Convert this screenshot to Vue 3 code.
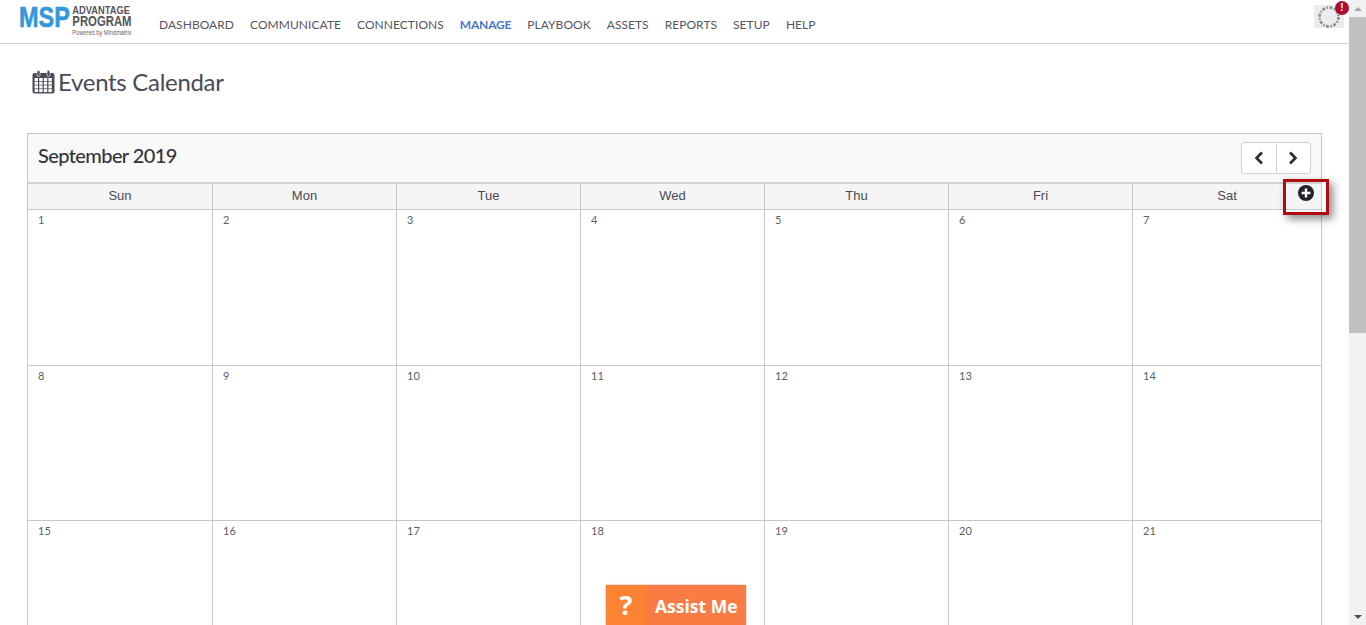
<template>
  <div class="screen">
    <div class="page">
      <!-- top navigation -->
      <header class="topbar">
        <div class="logo-slot">
          <div class="logo">
            <span class="logo-msp">MSP</span>
            <div class="logo-side">
              <span class="logo-adv">ADVANTAGE</span>
              <span class="logo-prog">PROGRAM</span>
              <span class="logo-powered">Powered by Mindmatrix</span>
            </div>
          </div>
        </div>
        <nav class="nav">
          <a v-for="item in navItems" :key="item" class="nav-item" :class="{ active: item === 'MANAGE' }">{{ item }}</a>
        </nav>
        <div class="avatar">
          <svg width="26" height="24" viewBox="0 0 26 24">
            <circle cx="13" cy="12" r="9.5" fill="none" stroke="#8c8c8c" stroke-width="2.6" stroke-dasharray="3 1.4 1.5 1.6" />
          </svg>
          <span class="alert">!</span>
        </div>
      </header>

      <h1 class="page-title">
        <svg class="title-icon" width="23" height="24" viewBox="0 0 23 24">
          <rect x="0.5" y="3" width="22" height="20.5" rx="2" fill="#4a4a55" />
          <rect x="5" y="0.5" width="3" height="6" rx="1.4" fill="#4a4a55" stroke="#fff" stroke-width="0.6" />
          <rect x="15" y="0.5" width="3" height="6" rx="1.4" fill="#4a4a55" stroke="#fff" stroke-width="0.6" />
          <g fill="#fff">
            <rect v-for="c in iconCells" :key="c.key" :x="c.x" :y="c.y" width="3.4" height="3" />
          </g>
        </svg>
        <span>Events Calendar</span>
      </h1>

      <section class="calendar">
        <div class="cal-toolbar">
          <h2 class="cal-month">September 2019</h2>
          <div class="cal-nav">
            <button class="cal-btn">
              <svg width="10" height="14" viewBox="0 0 10 14"><path d="M8 1.5 2.5 7 8 12.5" fill="none" stroke="#2b2b33" stroke-width="2.6" /></svg>
            </button>
            <button class="cal-btn">
              <svg width="10" height="14" viewBox="0 0 10 14"><path d="M2 1.5 7.5 7 2 12.5" fill="none" stroke="#2b2b33" stroke-width="2.6" /></svg>
            </button>
          </div>
        </div>

        <div class="cal-head">
          <div v-for="d in weekdays" :key="d" class="cal-head-cell">{{ d }}</div>
        </div>

        <div v-for="(week, i) in weeks" :key="i" class="cal-week">
          <div v-for="day in week" :key="day" class="cal-day">{{ day }}</div>
        </div>

        <!-- callout over the add button -->
        <div class="add-callout">
          <span class="add-btn">
            <svg width="16" height="16" viewBox="0 0 16 16">
              <circle cx="8" cy="8" r="8" fill="#24242c" />
              <path d="M8 3.6v8.8M3.6 8h8.8" stroke="#fff" stroke-width="2.4" />
            </svg>
          </span>
        </div>
      </section>

      <div class="assist">
        <span class="assist-q">?</span>
        <span class="assist-label">Assist Me</span>
      </div>
    </div>

    <div class="scrollbar">
      <div class="scroll-arrow"><span class="tri up"></span></div>
      <div class="scroll-thumb"></div>
      <div class="scroll-rest"></div>
      <div class="scroll-arrow"><span class="tri down"></span></div>
    </div>
  </div>
</template>

<script setup>
const navItems = ['DASHBOARD', 'COMMUNICATE', 'CONNECTIONS', 'MANAGE', 'PLAYBOOK', 'ASSETS', 'REPORTS', 'SETUP', 'HELP']
const weekdays = ['Sun', 'Mon', 'Tue', 'Wed', 'Thu', 'Fri', 'Sat']

// 3 rows are visible, the rest is cut by the window
const weeks = [0, 1, 2].map(w => Array.from({ length: 7 }, (_, d) => w * 7 + d + 1))

const iconCells = []
for (let r = 0; r < 4; r++) {
  for (let c = 0; c < 4; c++) {
    iconCells.push({ key: `${r}-${c}`, x: 2.6 + c * 4.6, y: 8 + r * 3.7 })
  }
}
</script>

<style scoped>
.screen {
  display: flex;
  width: 1366px;
  height: 625px;
  overflow: hidden;
  background: #fff;
  font-family: Lato, "Liberation Sans", sans-serif;
  color: #4a4a55;
}

.page {
  position: relative;
  flex: 1;
  min-width: 0;
}

.topbar {
  position: relative;
  display: flex;
  align-items: flex-start;
  height: 43px;
  border-bottom: 1px solid #cfcfcf;
}

.logo-slot {
  width: 159px;
  flex: none;
}

/* the logo lettering is condensed, no narrow family is installed */
.logo {
  display: inline-flex;
  gap: 3px;
  margin: 3px 0 0 19px;
  transform: scaleX(0.81);
  transform-origin: left top;
}

.logo-msp {
  margin-top: 1px;
  font: bold 29px/26px "Liberation Sans", sans-serif;
  color: #3498d8;
  -webkit-text-stroke: 0.6px #3498d8;
}

.logo-side {
  display: flex;
  flex-direction: column;
  margin-top: 3px;
}

.logo-adv {
  font: bold 11.5px/9px "Liberation Sans", sans-serif;
  color: #55555c;
  white-space: nowrap;
}

.logo-prog {
  font: bold 14px/13px "Liberation Sans", sans-serif;
  color: #55555c;
  white-space: nowrap;
}

.logo-powered {
  margin-top: 1px;
  font: 7px/8px "Liberation Sans", sans-serif;
  color: #666;
  white-space: nowrap;
}

.nav {
  display: flex;
  gap: 16px;
  margin-top: 17px;
}

.nav-item {
  font-size: 12px;
  line-height: 16px;
  color: #55555f;
  letter-spacing: 0.05px;
}

.nav-item.active {
  color: #4a76c2;
  font-weight: 700;
  letter-spacing: -0.2px;
}

.avatar {
  position: absolute;
  top: 5px;
  right: 5px;
  display: flex;
  align-items: center;
  justify-content: center;
  width: 30px;
  height: 23px;
  background: #ececec;
}

.alert {
  position: absolute;
  top: -4px;
  right: -5px;
  width: 14px;
  height: 14px;
  border-radius: 50%;
  background: #ab0f2e;
  color: #fff;
  font: bold 10px/14px "Liberation Sans", sans-serif;
  text-align: center;
}

.page-title {
  display: flex;
  align-items: center;
  gap: 3px;
  height: 30px;
  margin: 22px 0 37px 32px;
  font-size: 24px;
  font-weight: 400;
  color: #4a4a55;
  letter-spacing: -0.3px;
}

.title-icon {
  margin-top: 2px;
}

.calendar {
  position: relative;
  width: 1295px;
  margin-left: 27px;
  border-left: 1px solid #c8c8c8;
  border-right: 1px solid #c8c8c8;
  border-top: 1px solid #c8c8c8;
  box-sizing: border-box;
}

.cal-toolbar {
  display: flex;
  align-items: center;
  justify-content: space-between;
  height: 48px;
  padding: 0 10px;
  background: #f9f9f9;
  border-bottom: 2px solid #d2d2d2;
}

.cal-month {
  margin: 0 0 7px;
  font-size: 20px;
  font-weight: 500;
  color: #33333b;
  letter-spacing: -0.6px;
}

.cal-nav {
  display: flex;
}

.cal-btn {
  display: flex;
  align-items: center;
  justify-content: center;
  width: 35.5px;
  height: 32px;
  padding: 0;
  background: #fff;
  border: 1px solid #d0d0d0;
  border-radius: 3px 0 0 3px;
}

.cal-btn + .cal-btn {
  margin-left: -1px;
  border-radius: 0 3px 3px 0;
}

.cal-head,
.cal-week {
  display: grid;
  grid-template-columns: 184px 184px 184px 184px 184px 184px 1fr;
}

.cal-head-cell {
  height: 25px;
  background: #f5f5f5;
  border-left: 1px solid #c8c8c8;
  border-bottom: 1px solid #c8c8c8;
  font: 13px/24px "Liberation Sans", sans-serif;
  color: #4a4a55;
  text-align: center;
}

.cal-head-cell:first-child,
.cal-day:first-child {
  border-left: 0;
}

.cal-week {
  height: 155.5px;
}

.cal-day {
  padding: 3px 0 0 10px;
  border-left: 1px solid #c8c8c8;
  border-bottom: 1px solid #c8c8c8;
  font-size: 11px;
  line-height: 14px;
  color: #5a5f66;
}

.add-callout {
  position: absolute;
  top: 45px;
  left: 1255px;
  display: flex;
  justify-content: center;
  width: 46px;
  height: 36px;
  box-sizing: border-box;
  border: 3px solid #b00d12;
  box-shadow: 4px 4px 8px rgba(0, 0, 0, 0.45);
}

.add-btn {
  margin-top: 3px;
  height: 16px;
}

.assist {
  position: absolute;
  top: 585px;
  left: 606px;
  display: flex;
  width: 140px;
  height: 40px;
  background: #f97c45;
  box-shadow: 0 0 2px rgba(0, 0, 0, 0.35);
  color: #fff;
  font-family: "Open Sans", sans-serif;
  font-weight: 700;
}

.assist-q {
  width: 40px;
  background: #fb8331;
  font-size: 27px;
  line-height: 40px;
  text-align: center;
}

.assist-label {
  margin-left: 9px;
  font-size: 17.5px;
  line-height: 43px;
  white-space: nowrap;
}

.scrollbar {
  display: flex;
  flex-direction: column;
  flex: none;
  width: 17px;
  background: #f1f1f1;
}

.scroll-arrow {
  display: flex;
  align-items: center;
  justify-content: center;
  height: 17px;
}

.scroll-thumb {
  height: 316px;
  background: #c1c1c1;
}

.scroll-rest {
  flex: 1;
}

.tri {
  width: 0;
  height: 0;
  border-left: 4px solid transparent;
  border-right: 4px solid transparent;
}

.tri.up {
  border-bottom: 4px solid #a3a3a3;
}

.tri.down {
  border-top: 4px solid #505050;
}
</style>

<style>
html,
body {
  margin: 0;
  overflow: hidden;
}
</style>
